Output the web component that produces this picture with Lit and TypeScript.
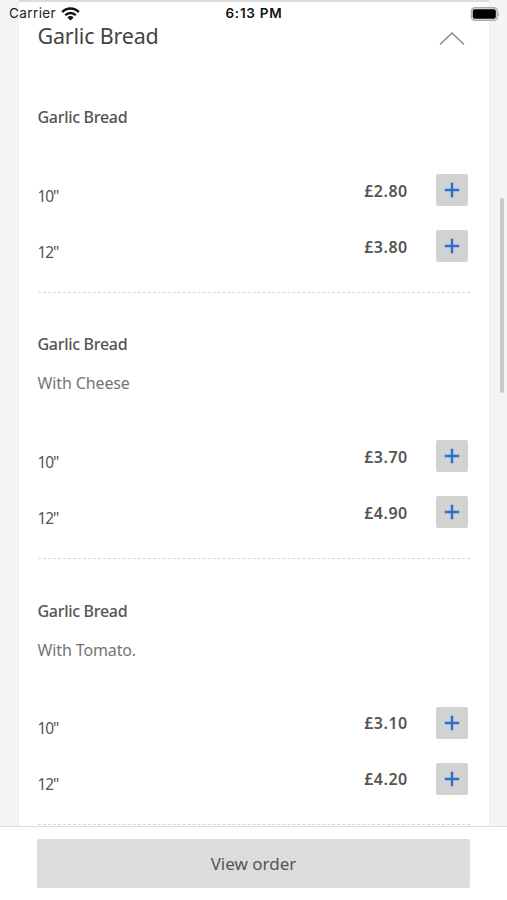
import { LitElement, html, css, svg, nothing } from "lit";
import { customElement } from "lit/decorators.js";

interface Size { label: string; price: string; }
interface Dish { name: string; note?: string; sizes: Size[]; }

const dishes: Dish[] = [
  { name: "Garlic Bread", sizes: [{ label: '10"', price: "£2.80" }, { label: '12"', price: "£3.80" }] },
  { name: "Garlic Bread", note: "With Cheese", sizes: [{ label: '10"', price: "£3.70" }, { label: '12"', price: "£4.90" }] },
  { name: "Garlic Bread", note: "With Tomato.", sizes: [{ label: '10"', price: "£3.10" }, { label: '12"', price: "£4.20" }] },
];

const plus = html`<svg width="16" height="16" viewBox="0 0 16 16">${svg`<path d="M8 0.8V15.2M0.8 8H15.2" stroke="#2a6fcb" stroke-width="2.4" fill="none"/>`}</svg>`;

@customElement("app-root")
export class AppRoot extends LitElement {
  static styles = css`
    :host {
      display: flex; flex-direction: column; position: relative;
      width: 507px; height: 900px; overflow: hidden; background: #f4f4f4;
      font-family: "Noto Sans", sans-serif; color: #555;
    }
    .status {
      position: absolute; z-index: 2; top: 0; left: 0; width: 507px; height: 27px;
      box-sizing: border-box; padding: 0 7px 0 9px;
      display: grid; grid-template-columns: 1fr auto 1fr; align-items: center;
      font: 13.5px/27px Inter, sans-serif; color: #222;
    }
    .carrier { display: flex; align-items: center; gap: 5px; letter-spacing: 0.4px; }
    .clock { font-weight: 600; color: #111; font-size: 13.5px; letter-spacing: 0.75px; margin-right: 1px; }
    .battery { justify-self: end; display: flex; }
    svg { display: block; }
    .scroll { flex: 0 0 826px; min-height: 0; overflow: hidden; display: flex; justify-content: center; }
    .card {
      width: 470px; height: 870px; box-sizing: border-box;
      padding: 0 19px; background: #fff; border-top: 2px solid #dcdcdc;
      box-shadow: 0 0 1px #ddd;
    }
    .head { height: 63.45px; display: flex; justify-content: space-between; }
    .head h1 {
      margin: 19px 0 0; font-size: 21.5px; line-height: 30px; font-weight: 400;
      color: #444; letter-spacing: -0.2px;
    }
    .head svg { margin: 29px 4.5px 0 0; }
    .dish { padding: 39.75px 0 17.5px; border-bottom: 1px dashed #d8d8d8; }
    .name { margin: 0; font-size: 16px; line-height: 24px; font-weight: 500; color: #555; letter-spacing: -0.3px; }
    .note { margin: 15px 0 0; font-size: 16px; line-height: 24px; color: #757575; letter-spacing: -0.12px; }
    .sizes { margin-top: 33px; }
    .row { height: 56px; display: flex; align-items: center; padding-right: 2px; }
    .label { flex: 1; font-size: 15.5px; line-height: 24px; padding-top: 11px; letter-spacing: -1.1px; }
    .price { font-size: 16px; line-height: 24px; font-weight: 600; padding-top: 1px; margin-right: 27.8px; letter-spacing: 0.5px; }
    .add {
      width: 32px; height: 32px; padding: 0; border: 0; border-radius: 2px;
      background: #d2d2d2; display: grid; place-items: center;
    }
    .thumb {
      position: absolute; right: 3px; top: 198px; width: 4px; height: 195px;
      border-radius: 2px; background: #c8c8c8;
    }
    .bar { flex: 1; background: #fff; border-top: 1px solid #dedede; padding: 12px 37px 0; }
    .order {
      display: block; width: 433px; height: 49px; border: 0; border-radius: 2px; padding: 0;
      background: #dcdcdc; color: #555; font: 17px/49px "Noto Sans", sans-serif;
    }
  `;

  render() {
    return html`
      <div class="status">
        <div class="carrier"><span>Carrier</span>
          <svg width="19" height="14" viewBox="0 0 19 14">
            <path d="M1.2 5.1A11.6 11.6 0 0 1 17.8 5.1" fill="none" stroke="#111" stroke-width="2.5"/>
            <path d="M4.2 8.2A7.5 7.5 0 0 1 14.8 8.2" fill="none" stroke="#111" stroke-width="2.3"/>
            <path d="M6.4 10.4A4.4 4.4 0 0 1 12.6 10.4L9.5 13.5Z" fill="#111"/>
          </svg>
        </div>
        <span class="clock">6:13 PM</span>
        <div class="battery">
          <svg width="30" height="14" viewBox="0 0 30 14">
            <rect x="1.3" y="0.7" width="26" height="12.6" rx="3.6" fill="#ddd" stroke="#aaa" stroke-width="1.2"/>
            <rect x="2.8" y="2.2" width="23" height="9.6" rx="2" fill="#000"/>
            <path d="M28.4 4.8Q30.4 7 28.4 9.2Z" fill="#aaa"/>
          </svg>
        </div>
      </div>
      <div class="scroll">
        <div class="card">
          <div class="head">
            <h1>Garlic Bread</h1>
            <svg width="26" height="16" viewBox="0 0 26 16"><path d="M1 13.5L13 2L25 13.5" fill="none" stroke="#888" stroke-width="1.4"/></svg>
          </div>
          ${dishes.map((d) => html`
            <section class="dish">
              <h2 class="name">${d.name}</h2>
              ${d.note ? html`<p class="note">${d.note}</p>` : nothing}
              <div class="sizes">
                ${d.sizes.map((s) => html`
                  <div class="row">
                    <span class="label">${s.label}</span>
                    <span class="price">${s.price}</span>
                    <button class="add" aria-label="Add">${plus}</button>
                  </div>`)}
              </div>
            </section>`)}
        </div>
      </div>
      <div class="thumb"></div>
      <div class="bar"><button class="order">View order</button></div>
    `;
  }
}
